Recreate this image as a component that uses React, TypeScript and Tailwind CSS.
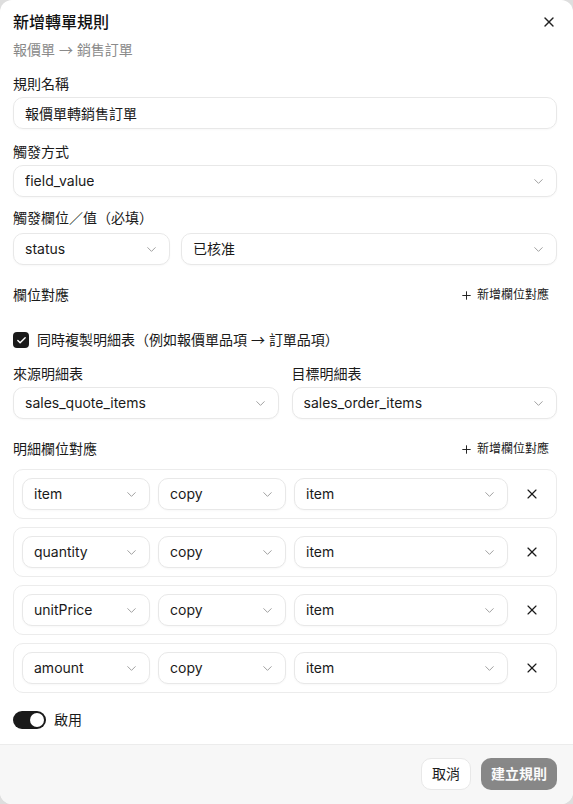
import React, { useState } from 'react';
import { ChevronDown, Check, Plus, X } from 'lucide-react';

const font = { fontFamily: 'Inter, "Noto Sans CJK TC", "Noto Sans", sans-serif' };

// arrow glyph taken from the CJK face, it is a bit wider than Inter's
const Arrow: React.FC = () => (
  <span className="leading-none" style={{ fontFamily: '"Noto Sans CJK TC", sans-serif' }}>
    →
  </span>
);

const SelectBox: React.FC<{ value: string; className?: string }> = ({ value, className = '' }) => (
  <div
    className={`h-8 flex items-center justify-between pl-[11px] pr-2.5 rounded-[10px] border border-[#e8e8e8] bg-white shadow-[0_1px_2px_rgba(0,0,0,0.03)] text-sm text-[#1a1a1a] ${className}`}
  >
    <span className="truncate">{value}</span>
    <ChevronDown size={15} strokeWidth={1.5} className="text-[#9a9a9a] shrink-0" />
  </div>
);

const Label: React.FC<{ children: React.ReactNode; className?: string }> = ({ children, className = '' }) => (
  <div className={`text-sm font-normal text-[#1a1a1a] leading-5 ${className}`}>{children}</div>
);

const AddButton: React.FC = () => (
  <button className="flex items-center gap-1 text-xs text-[#1a1a1a] pr-2">
    <Plus size={13} strokeWidth={1.75} />
    新增欄位對應
  </button>
);

const detailRows = [
  { source: 'item', mode: 'copy', target: 'item' },
  { source: 'quantity', mode: 'copy', target: 'item' },
  { source: 'unitPrice', mode: 'copy', target: 'item' },
  { source: 'amount', mode: 'copy', target: 'item' },
];

const App: React.FC = () => {
  const [copyDetails, setCopyDetails] = useState(true);
  const [enabled, setEnabled] = useState(true);
  const [name, setName] = useState('報價單轉銷售訂單');

  return (
    <div className="w-full h-[804px] bg-[#dedede]" style={font}>
      <div className="w-full h-full bg-white rounded-xl overflow-hidden flex flex-col">
        <div className="flex-1 pl-[13px] pr-[16px] pt-[10px]">
          {/* header */}
          <div className="flex items-center justify-between">
            <h2 className="text-base font-medium text-[#111] leading-6">新增轉單規則</h2>
            <button className="text-[#222]" aria-label="Close">
              <X size={16} strokeWidth={2} />
            </button>
          </div>
          <p className="mt-[6px] h-5 text-sm text-[#8a8a8a] leading-5">
            報價單 <Arrow /> 銷售訂單
          </p>

          <Label className="mt-[14px]">規則名稱</Label>
          <input
            className="mt-[3px] w-full h-8 px-[11px] rounded-[10px] border border-[#e8e8e8] shadow-[0_1px_2px_rgba(0,0,0,0.03)] text-sm text-[#1a1a1a] outline-none"
            value={name}
            onChange={e => setName(e.target.value)}
          />

          <Label className="mt-[13px]">觸發方式</Label>
          <SelectBox value="field_value" className="mt-[3px]" />

          <Label className="mt-[11px]">觸發欄位／值（必填）</Label>
          <div className="mt-[5px] flex gap-[11px]">
            <SelectBox value="status" className="w-[157px]" />
            <SelectBox value="已核准" className="flex-1" />
          </div>

          <div className="mt-[20px] flex items-center justify-between">
            <Label>欄位對應</Label>
            <AddButton />
          </div>

          {/* copy detail lines */}
          <label className="mt-[25px] h-5 flex items-center gap-2 cursor-pointer" onClick={() => setCopyDetails(v => !v)}>
            <span
              className={`w-4 h-4 rounded-[4px] flex items-center justify-center ${copyDetails ? 'bg-[#1a1a1a]' : 'border border-gray-300'}`}
            >
              {copyDetails && <Check size={11} strokeWidth={3} className="text-white" />}
            </span>
            <span className="text-sm text-[#1a1a1a] leading-5">
              同時複製明細表（例如報價單品項 <Arrow /> 訂單品項）
            </span>
          </label>

          <div className="mt-[14px] grid grid-cols-2 gap-x-[13px]">
            <div>
              <Label>來源明細表</Label>
              <SelectBox value="sales_quote_items" className="mt-[3px]" />
            </div>
            <div>
              <Label>目標明細表</Label>
              <SelectBox value="sales_order_items" className="mt-[3px]" />
            </div>
          </div>

          <div className="mt-[20px] flex items-center justify-between">
            <Label>明細欄位對應</Label>
            <AddButton />
          </div>

          <div className="mt-[10px] flex flex-col gap-[8px]">
            {detailRows.map((row, idx) => (
              <div key={idx} className="flex items-center gap-2 p-2 rounded-[10px] border border-[#ececec]">
                <SelectBox value={row.source} className="w-32" />
                <SelectBox value={row.mode} className="w-32" />
                <SelectBox value={row.target} className="flex-1" />
                <button className="w-8 h-8 flex items-center justify-center text-[#1a1a1a]" aria-label="Remove">
                  <X size={16} strokeWidth={1.75} />
                </button>
              </div>
            ))}
          </div>

          {/* enabled switch */}
          <div className="mt-[17px] flex items-center gap-2">
            <button
              className={`w-[33px] h-[18px] rounded-full p-[2px] flex items-center ${enabled ? 'bg-[#1a1a1a] justify-end' : 'bg-gray-300 justify-start'}`}
              onClick={() => setEnabled(v => !v)}
            >
              <span className="w-[14px] h-[14px] rounded-full bg-white" />
            </button>
            <span className="text-sm text-[#1a1a1a]">啟用</span>
          </div>
        </div>

        {/* footer */}
        <div className="h-[60px] shrink-0 border-t border-[#ececec] bg-[#f7f7f7] flex items-center justify-end gap-[10px] px-[16px] pb-[2px]">
          <button className="h-8 px-2.5 rounded-[10px] border border-[#e8e8e8] bg-white text-sm text-[#1a1a1a]">
            取消
          </button>
          <button className="h-8 px-2.5 rounded-[10px] bg-[#1a1a1a] opacity-50 text-sm font-semibold text-white" disabled>
            建立規則
          </button>
        </div>
      </div>
    </div>
  );
};

export default App;
